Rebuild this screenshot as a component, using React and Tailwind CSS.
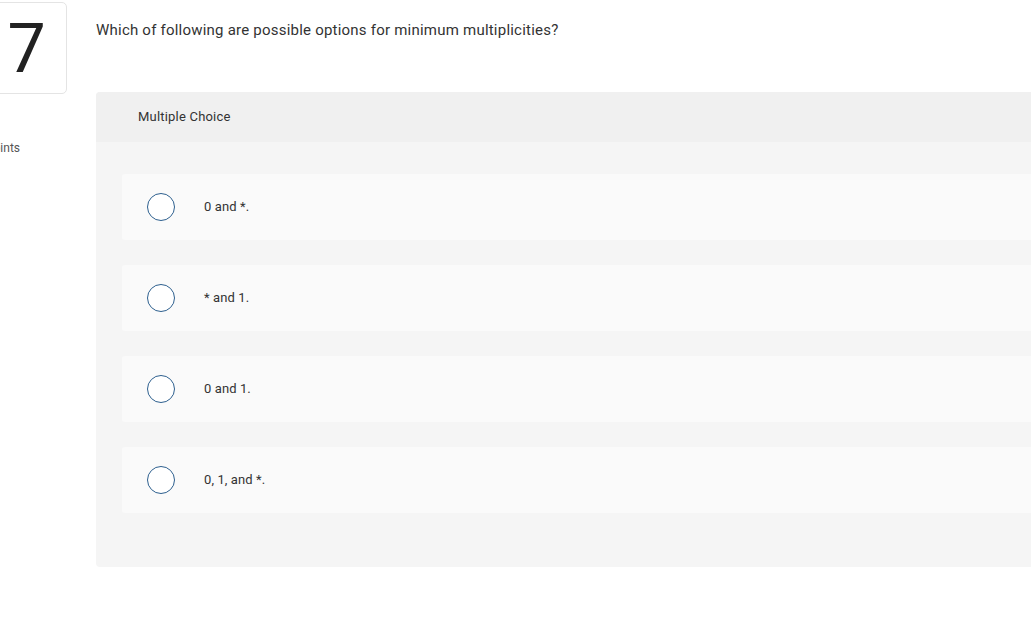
const options = ["0 and *.", "* and 1.", "0 and 1.", "0, 1, and *."];

const Option = ({ label }) => (
    <div className="flex h-[66px] items-center rounded-[3px] bg-[#fafafa] pl-[25px]">
        <span className="h-[28px] w-[28px] shrink-0 rounded-full border-[1.5px] border-[#2d5f8e] bg-white" />
        <span className="ml-[29px] text-[13px] tracking-[0.1px] text-[#333]">{label}</span>
    </div>
);

const App = () => {
    return (
        <div className="flex h-[620px] w-full overflow-hidden bg-white font-['Roboto','Liberation_Sans',sans-serif]">
            {/* question number column, partly off the left edge */}
            <div className="-ml-[14px] w-[110px] shrink-0 pt-[2px]">
                <div className="flex h-[92px] w-[81px] items-center justify-center rounded-[5px] border border-[#e4e4e4]">
                    <span className="mt-[2px] text-[68px] font-normal leading-none text-[#222]">7</span>
                </div>
                <p className="mt-[45px] text-[12px] text-[#555]">Points</p>
            </div>

            <div className="w-[980px] shrink-0">
                <p className="pt-[20px] text-[15px] leading-[20px] tracking-[0.22px] text-[#333]">
                    Which of following are possible options for minimum multiplicities?
                </p>

                <div className="mt-[52px] rounded-l-[4px] bg-[#f5f5f5]">
                    <div className="flex h-[50px] items-center rounded-tl-[4px] bg-[#f0f0f0] pl-[42px] text-[13px] tracking-[0.2px] text-[#333]">
                        Multiple Choice
                    </div>
                    <div className="flex flex-col gap-[25px] pb-[54px] pl-[26px] pt-[32px]">
                        {options.map((o) => (
                            <Option key={o} label={o} />
                        ))}
                    </div>
                </div>
            </div>
        </div>
    );
};

export default App;
